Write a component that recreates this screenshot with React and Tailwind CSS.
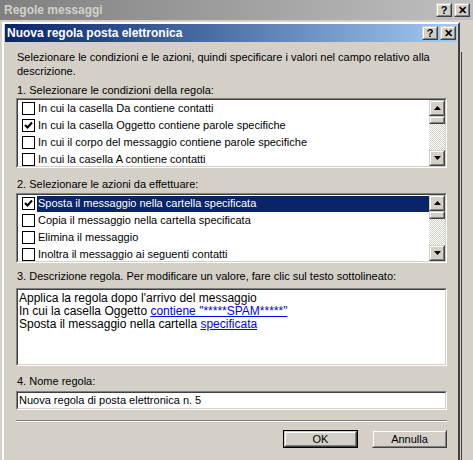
import React from "react";

const Sunken = ({ className = "", children }) => (
  <div className={"border border-t-[#808080] border-l-[#808080] border-r-white border-b-white " + className}>
    <div className="h-full border border-t-[#404040] border-l-[#404040] border-r-[#d4d0c8] border-b-[#d4d0c8] bg-white">
      {children}
    </div>
  </div>
);

const Raised = ({ className = "", children }) => (
  <div className={"border border-t-[#d4d0c8] border-l-[#d4d0c8] border-r-[#404040] border-b-[#404040] " + className}>
    <div className="h-full border border-t-white border-l-white border-r-[#808080] border-b-[#808080] bg-[#d4d0c8] flex items-center justify-center">
      {children}
    </div>
  </div>
);

const Arrow = ({ down }) => (
  <svg width="7" height="4" viewBox="0 0 7 4">
    <polygon points={down ? "0,0 7,0 3.5,4" : "3.5,0 7,4 0,4"} fill="#000" />
  </svg>
);

const Scrollbar = () => (
  <div className="w-[16px] h-full flex flex-col bg-[repeating-conic-gradient(#d4d0c8_0%_25%,#ffffff_0%_50%)] bg-[length:2px_2px]">
    <Raised className="h-[16px]"><Arrow /></Raised>
    <Raised className="h-[8px]" />
    <div className="flex-1" />
    <Raised className="h-[16px]"><Arrow down /></Raised>
  </div>
);

const Check = ({ on }) => (
  <div className="w-[13px] h-[13px] border border-black bg-white flex items-center justify-center shrink-0">
    {on && (
      <svg width="9" height="9" viewBox="0 0 9 9">
        <polyline points="1,4 3.5,6.5 8,1.5" fill="none" stroke="#000" strokeWidth="2" />
      </svg>
    )}
  </div>
);

const ListBox = ({ items }) => (
  <Sunken className="h-[70px]">
    <div className="flex h-full overflow-hidden">
      <div className="flex-1 flex flex-col">
        {items.map((it) => (
          <div key={it.label} className="h-[17px] shrink-0 flex items-center pl-[4px]">
            <Check on={it.checked} />
            <span
              className={
                "ml-[2px] flex-1 h-[16px] flex items-center pl-[1px] " +
                (it.selected ? "bg-[#0a246a] text-white" : "")
              }
            >
              {it.label}
            </span>
          </div>
        ))}
      </div>
      <Scrollbar />
    </div>
  </Sunken>
);

const TitleBtn = ({ children }) => (
  <Raised className="w-[16px] h-[14px]">
    <span className="text-[11px] font-bold leading-none text-black">{children}</span>
  </Raised>
);

const conditions = [
  { label: "In cui la casella Da contiene contatti" },
  { label: "In cui la casella Oggetto contiene parole specifiche", checked: true },
  { label: "In cui il corpo del messaggio contiene parole specifiche" },
  { label: "In cui la casella A contiene contatti" },
];

const actions = [
  { label: "Sposta il messaggio nella cartella specificata", checked: true, selected: true },
  { label: "Copia il messaggio nella cartella specificata" },
  { label: "Elimina il messaggio" },
  { label: "Inoltra il messaggio ai seguenti contatti" },
];

const Button = ({ children, def }) => (
  <div className={"w-[75px] h-[18px] " + (def ? "border border-black" : "")}>
    <Raised className="h-full">
      <span className="leading-none">{children}</span>
    </Raised>
  </div>
);

export default function App() {
  return (
    <div className="w-[473px] h-[460px] bg-[#d4d0c8] overflow-hidden font-['Liberation_Sans',Arial,sans-serif] text-[11px] text-black">
      <div className="h-[20px] flex items-center justify-between pl-[4px] pr-[3px] bg-gradient-to-r from-[#808080] to-[#c0c0c0]">
        <span className="font-bold text-[12px] text-[#d4d0c8]">Regole messaggi</span>
        <div className="flex gap-[2px]">
          <TitleBtn>?</TitleBtn>
          <TitleBtn>✕</TitleBtn>
        </div>
      </div>

      <div className="flex pt-[2px]">
        <div className="ml-[2px] w-[458px] h-[440px] border-2 border-t-white border-l-white border-r-[#404040] border-b-[#404040] px-[1px] flex flex-col">
          <div className="h-[18px] flex items-center justify-between pl-[2px] pr-[1px] bg-gradient-to-r from-[#0a246a] to-[#a6caf0]">
            <span className="font-bold text-[12px] text-white">Nuova regola posta elettronica</span>
            <div className="flex gap-[2px]">
              <TitleBtn>?</TitleBtn>
              <TitleBtn>✕</TitleBtn>
            </div>
          </div>

          <div className="pl-[11px] pr-[10px] flex flex-col">
            <p className="pt-[8px] pl-[1px] leading-[14px]">
              Selezionare le condizioni e le azioni, quindi specificare i valori nel campo relativo alla descrizione.
            </p>

            <div className="mt-[6px] pl-[1px] leading-[13px]">1. Selezionare le condizioni della regola:</div>
            <div className="mt-[1px]">
              <ListBox items={conditions} />
            </div>

            <div className="mt-[10px] pl-[1px] leading-[13px]">2. Selezionare le azioni da effettuare:</div>
            <div className="mt-[2px]">
              <ListBox items={actions} />
            </div>

            <div className="mt-[7px] pl-[1px] leading-[13px]">
              3. Descrizione regola. Per modificare un valore, fare clic sul testo sottolineato:
            </div>
            <Sunken className="mt-[5px] h-[78px]">
              <div className="pt-[2px] pl-[1px] text-[12px] leading-[13px]">
                <div>Applica la regola dopo l'arrivo del messaggio</div>
                <div>
                  In cui la casella Oggetto <span className="text-[#0000ff] underline">contiene "*****SPAM*****"</span>
                </div>
                <div>
                  Sposta il messaggio nella cartella <span className="text-[#0000ff] underline">specificata</span>
                </div>
              </div>
            </Sunken>

            <div className="mt-[9px] pl-[1px] leading-[13px]">4. Nome regola:</div>
            <Sunken className="mt-[3px] h-[19px]">
              <div className="h-full flex items-center pl-[1px]">Nuova regola di posta elettronica n. 5</div>
            </Sunken>

            <div className="mt-[10px] border-t border-t-[#808080] border-b border-b-white" />

            <div className="mt-[8px] flex justify-end gap-[14px]">
              <Button def>OK</Button>
              <Button>Annulla</Button>
            </div>
          </div>
        </div>
        <div className="flex-1 pl-[1px] pt-[30px]">
          <div className="w-[1px] h-[410px] bg-[#404040]" />
        </div>
      </div>
    </div>
  );
}
